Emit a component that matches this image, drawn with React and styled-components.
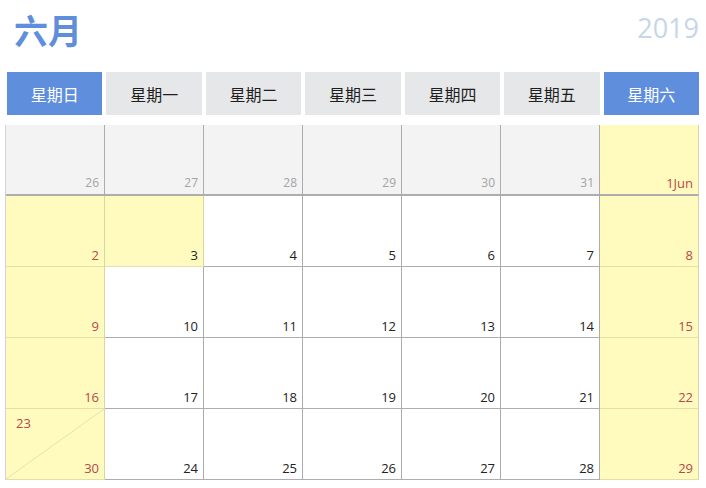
import styled, { createGlobalStyle } from "styled-components";

const GlobalStyle = createGlobalStyle`
  body {
    margin: 0;
    background: #fff;
    font-family: "Open Sans", "Noto Sans CJK SC", sans-serif;
  }
`;

const Page = styled.div`
  width: 706px;
  height: 488px;
  box-sizing: border-box;
  padding: 0 7px 0 6px;
`;

const TopBar = styled.div`
  display: flex;
  justify-content: space-between;
  align-items: flex-start;
  height: 72px;
  padding-left: 8px;
`;

const Month = styled.h1`
  margin: 12px 0 0;
  font-family: "Noto Sans CJK SC", sans-serif;
  font-size: 34px;
  line-height: 36px;
  font-weight: 700;
  color: #5f8fdc;
`;

const Year = styled.div`
  margin-top: 11px;
  font-size: 27px;
  line-height: 34px;
  color: #c6d6ea;
`;

const WeekRow = styled.div`
  display: grid;
  grid-template-columns: repeat(7, 1fr);
  gap: 4px;
  margin-left: 1px;
  height: 43px;
`;

const WeekCell = styled.div`
  display: flex;
  align-items: center;
  justify-content: center;
  background: ${(p) => (p.$weekend ? "#5f8fdc" : "#e6e7e9")};
  color: ${(p) => (p.$weekend ? "#fff" : "#1e1e1e")};
  font-family: "Noto Sans CJK SC", sans-serif;
  font-size: 16px;
`;

const Grid = styled.div`
  display: grid;
  grid-template-columns: repeat(7, 99px);
  grid-auto-rows: 71px;
  margin: 10px 0 0 -1px;
  border-left: 1px solid #d4d4d4;
`;

const bg = { other: "#f3f3f4", weekend: "#fffbbf", normal: "#fff" };
const numColor = { other: "#a3a3a3", weekend: "#b8484a", normal: "#222" };

const Cell = styled.div`
  position: relative;
  box-sizing: border-box;
  background: ${(p) => bg[p.$kind]};
  border-right: 1px solid ${(p) => (p.$kind === "weekend" ? "#d8d4a4" : "#acacac")};
  border-bottom: ${(p) => (p.$first ? "2px" : "1px")} solid
    ${(p) => (p.$kind === "weekend" && !p.$first ? "#e4dfa8" : "#adadad")};
  display: flex;
  align-items: flex-end;
  justify-content: flex-end;
  padding: 0 5px 2px 0;
`;

const Num = styled.span`
  font-size: ${(p) => (p.$kind === "other" ? "12px" : "13px")};
  line-height: 18px;
  color: ${(p) => numColor[p.$kind]};
  position: relative;
`;

const TopNum = styled.span`
  position: absolute;
  top: 5px;
  left: 10px;
  font-size: 13px;
  line-height: 18px;
  color: #b8484a;
`;

const Diagonal = styled.svg`
  position: absolute;
  inset: 0;
  width: 100%;
  height: 100%;
`;

const weeks = ["星期日", "星期一", "星期二", "星期三", "星期四", "星期五", "星期六"];

const days = [
  [26, "other"], [27, "other"], [28, "other"], [29, "other"], [30, "other"], [31, "other"], ["1Jun", "weekend"],
];
for (let d = 2; d <= 29; d++) {
  const col = (d - 2) % 7;
  days.push([d, col === 0 || col === 6 ? "weekend" : "normal"]);
}

export default function App() {
  return (
    <>
      <GlobalStyle />
      <Page>
        <TopBar>
          <Month>六月</Month>
          <Year>2019</Year>
        </TopBar>
        <WeekRow>
          {weeks.map((w, i) => (
            <WeekCell key={w} $weekend={i === 0 || i === 6}>
              {w}
            </WeekCell>
          ))}
        </WeekRow>
        <Grid>
          {days.map(([d, kind], i) => {
            if (d === 23) {
              return (
                <Cell key={i} $kind="weekend">
                  <Diagonal viewBox="0 0 98 71" preserveAspectRatio="none">
                    <line x1="0" y1="71" x2="98" y2="0" stroke="#e6e0b0" strokeWidth="1" />
                  </Diagonal>
                  <TopNum>23</TopNum>
                  <Num $kind="weekend">30</Num>
                </Cell>
              );
            }
            // June 3 is shaded like a weekend but keeps a black number
            const holiday = d === 3;
            return (
              <Cell key={i} $kind={holiday ? "weekend" : kind} $first={i < 7}>
                <Num $kind={holiday ? "normal" : kind}>{d}</Num>
              </Cell>
            );
          })}
        </Grid>
      </Page>
    </>
  );
}
